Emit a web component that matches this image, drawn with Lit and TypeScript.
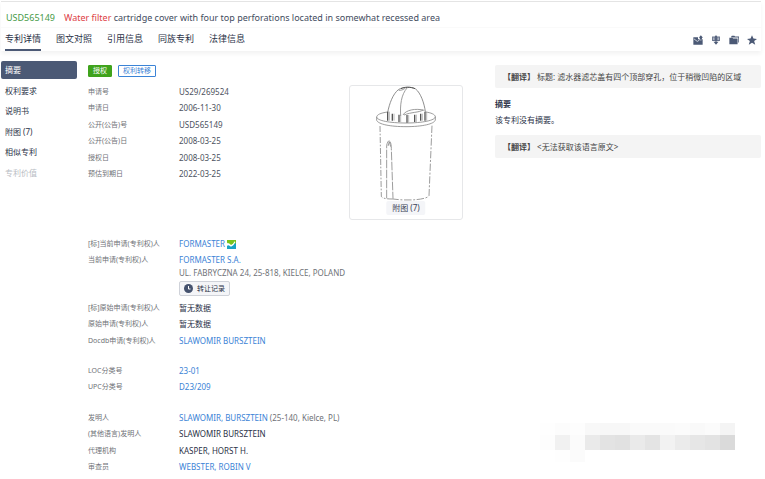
import { LitElement, html, svg, css, nothing, TemplateResult } from "lit";
import { customElement, property, state } from "lit/decorators.js";
import { classMap } from "lit/directives/class-map.js";

interface Field {
  label: string;
  value: string;
  link?: boolean;
  strong?: boolean;
  note?: string;
  brand?: boolean;
  address?: string;
}

const FILING: Field[] = [
  { label: "申请号", value: "US29/269524" },
  { label: "申请日", value: "2006-11-30" },
  { label: "公开(公告)号", value: "USD565149" },
  { label: "公开(公告)日", value: "2008-03-25" },
  { label: "授权日", value: "2008-03-25" },
  { label: "预估到期日", value: "2022-03-25" },
];

const OWNERS: Field[] = [
  { label: "[标]当前申请(专利权)人", value: "FORMASTER", link: true, brand: true },
  {
    label: "当前申请(专利权)人",
    value: "FORMASTER S.A.",
    link: true,
    address: "UL. FABRYCZNA 24, 25-818, KIELCE, POLAND",
  },
  { label: "[标]原始申请(专利权)人", value: "暂无数据", strong: true },
  { label: "原始申请(专利权)人", value: "暂无数据", strong: true },
  { label: "Docdb申请(专利权)人", value: "SLAWOMIR BURSZTEIN", link: true },
];

const CLASSES: Field[] = [
  { label: "LOC分类号", value: "23-01", link: true },
  { label: "UPC分类号", value: "D23/209", link: true },
];

const PEOPLE: Field[] = [
  { label: "发明人", value: "SLAWOMIR, BURSZTEIN", link: true, note: "(25-140, Kielce, PL)" },
  { label: "(其他语言)发明人", value: "SLAWOMIR BURSZTEIN", strong: true },
  { label: "代理机构", value: "KASPER, HORST H.", strong: true },
  { label: "审查员", value: "WEBSTER, ROBIN V", link: true },
];

const reset = css`
  * {
    box-sizing: border-box;
  }
  a {
    color: inherit;
    text-decoration: none;
  }
  button {
    font: inherit;
    color: inherit;
    margin: 0;
    padding: 0;
    border: 0;
    background: none;
    cursor: pointer;
  }
  svg {
    display: block;
  }
`;

@customElement("field-list")
export class FieldList extends LitElement {
  @property({ attribute: false }) fields: Field[] = [];

  static styles = [
    reset,
    css`
      :host {
        display: block;
      }
      .list {
        margin: 0;
      }
      .row {
        display: grid;
        grid-template-columns: 91px 1fr;
        min-height: 16px;
        line-height: 16px;
      }
      .row:nth-child(even) {
        min-height: 17px;
      }
      .label {
        font-size: 7px;
        color: #6f7277;
        white-space: nowrap;
      }
      .value {
        margin: 0;
        color: #4c5260;
        white-space: nowrap;
      }
      .line {
        display: flex;
        align-items: center;
        gap: 2px;
      }
      .strong {
        color: #2b3247;
      }
      .link {
        color: #3b83d6;
      }
      .note,
      .address {
        color: #6f7277;
      }
      .address {
        line-height: 9px;
      }
      .record {
        display: flex;
        align-items: center;
        gap: 4px;
        height: 15px;
        margin: 4px 0;
        padding: 0 4px;
        border: 1px solid #cfd2d9;
        border-radius: 2px;
        background: #f4f5f8;
        color: #2b3247;
        font-size: 7px;
      }
    `,
  ];

  private brandIcon() {
    return html`<svg width="9" height="9" viewBox="0 0 27 27" aria-hidden="true">
      <rect width="27" height="27" rx="1" fill="#18a3c4" />
      <path d="M0 0H27V9L20 13L12 16L0 9Z" fill="#7ac31c" />
      <path d="M1 8L8 11L12 15L18 11L23 4L25 7L19 16L12 20L5 16L0 17V12Z" fill="#fff" />
      <path d="M0 19L5 18L12 22L19 18L27 10V27H0Z" fill="#18a3c4" />
    </svg>`;
  }

  private row(f: Field) {
    return html`<div class="row">
      <dt class="label">${f.label}</dt>
      <dd class="value">
        <div class="line">
          ${f.link
            ? html`<a class="link" href="#">${f.value}</a>`
            : html`<span class=${classMap({ strong: !!f.strong })}>${f.value}</span>`}
          ${f.brand ? this.brandIcon() : nothing}
          ${f.note ? html`<span class="note">${f.note}</span>` : nothing}
        </div>
        ${f.address
          ? html`<div class="address">${f.address}</div>
              <button class="record" type="button">
                <svg width="9" height="9" viewBox="0 0 18 18" aria-hidden="true">
                  <circle cx="9" cy="9" r="9" fill="#45526e" />
                  <path d="M9 4V10H13" fill="none" stroke="#fff" stroke-width="2" />
                </svg>
                转让记录
              </button>`
          : nothing}
      </dd>
    </div>`;
  }

  render() {
    return html`<dl class="list">${this.fields.map((f) => this.row(f))}</dl>`;
  }
}

const SLOTS = [
  { x: 144, top: 95, bottom: 122 },
  { x: 158, top: 101, bottom: 122 },
  { x: 178, top: 104, bottom: 126 },
  { x: 202, top: 105, bottom: 128 },
  { x: 225, top: 104, bottom: 126 },
  { x: 243, top: 101, bottom: 122 },
  { x: 256, top: 95, bottom: 122 },
];

@customElement("cartridge-figure")
export class CartridgeFigure extends LitElement {
  static styles = [
    reset,
    css`
      :host {
        display: block;
      }
      .frame {
        position: relative;
        margin: 0;
        border: 1px solid #e6e7e9;
        border-radius: 3px;
      }
      .drawing {
        width: 100%;
        height: auto;
      }
      .more {
        position: absolute;
        bottom: 4px;
        left: 50%;
        transform: translateX(-50%);
        padding: 0 6px;
        border-radius: 2px;
        background: #f4f5f8;
        color: #3a4256;
        line-height: 14px;
        white-space: nowrap;
      }
    `,
  ];

  render() {
    return html`<figure class="frame">
      <svg class="drawing" viewBox="31 18 336 399" role="img" aria-label="附图">
        <g fill="none" stroke="#888" stroke-width="2.5">
          <path d="M144 98C149 70 160 42 176 29C190 20 215 19 228 27C243 39 254 70 257 95" stroke="#777" />
          <path d="M184 26C194 21 212 20 226 26" stroke="#555" stroke-width="3" />
          <path d="M183 108C181 76 184 44 203 23" />
          <path d="M177 31C190 31 194 27 199 22" />
          <path d="M190 105C198 90 228 84 254 91M193 105C214 96 238 98 250 90" />
          <path d="M144 96C122 99 112 104 111 111C112 122 150 129 199 129C249 129 287 121 287 110C286 103 274 98 257 96" />
          <path d="M111 111V121C116 133 152 140 199 140C248 140 284 132 287 120V110" />
          <path d="M121 138L125 349C127 355 139 357 160 357" stroke-dasharray="18 5 5 5" />
          <path d="M277 137L268 347C263 358 211 364 160 357" stroke-dasharray="22 5 6 5" />
          <path d="M141 355V196C143 187 146 182 149 182C153 185 155 194 155 206L160 356" stroke-dasharray="26 4" />
          <path d="M145 198L149 185L153 200" />
        </g>
        <g fill="none" stroke="#555" stroke-width="4">
          ${SLOTS.map((s) => svg`<path d=${`M${s.x} ${s.top}V${s.bottom}`} />`)}
        </g>
        <g fill="none" stroke="#999" stroke-width="2">
          ${SLOTS.map((s) => svg`<path d=${`M${s.x + 5} ${s.top}V${s.bottom}`} />`)}
        </g>
      </svg>
      <button class="more" type="button">附图 (7)</button>
    </figure>`;
  }
}

const MOSAIC: string[][] = [
  ["#fefefe", "#fcfcfc", "#fdfdfd", "#f8f8f8", "#f7f7f7", "#f7f7f7", "#fafafa", "#fafafa", "#fafafa", "#fbfbfb", "#f9f9f9", "#fbfbfb", "#f4f4f4"],
  ["#fdfdfd", "#f1f1f1", "#fbfbfb", "#eaeaea", "#e3e3e3", "#e1e1e1", "#eaeaea", "#e4e4e4", "#f2f2f2", "#ebebeb", "#e6e6e6", "#e3e3e3", "#dadada"],
  ["#fff", "#fefefe", "#fbfbfb", "#fff", "#fff", "#fff", "#fff", "#fff", "#fff", "#fff", "#fff", "#fff", "#fff"],
];

const TABS = ["专利详情", "图文对照", "引用信息", "同族专利", "法律信息"];
const SECTIONS = ["摘要", "权利要求", "说明书", "附图 (7)", "相似专利", "专利价值"];

const TOOLS: { name: string; art: TemplateResult }[] = [
  {
    name: "导出",
    art: svg`<path d="M1 6H14V12H18V15H24V12H27V27H1Z" fill="#4b5975"/><path d="M22 1L28 8H25V13H19V8H16Z" fill="#4b5975"/><path d="M3 11L12 18L17 15" fill="none" stroke="#fff" stroke-width="2"/>`,
  },
  {
    name: "下载",
    art: svg`<path d="M3 4H11V2H17V4H25V17H3Z" fill="#66728b"/><path d="M8 7V14M20 7V14" stroke="#fff" stroke-width="2" fill="none"/><path d="M14 2V22" stroke="#4b5975" stroke-width="3"/><path d="M7 19H21L14 27Z" fill="#4b5975"/>`,
  },
  {
    name: "收藏夹",
    art: svg`<path d="M6 5L8 2H15L17 4H28V21H26V7H6Z" fill="#4b5975"/><path d="M1 8H9L12 10H24V26H1Z" fill="#4b5975"/>`,
  },
  {
    name: "关注",
    art: svg`<path d="M14 1L18 10L28 11L20 17L23 27L14 22L5 27L8 17L0 11L10 10Z" fill="#4b5975"/>`,
  },
];

@customElement("app-root")
export class AppRoot extends LitElement {
  @state() private tab = 0;
  @state() private section = 0;

  static styles = [
    reset,
    css`
      :host {
        display: block;
        position: relative;
        box-sizing: border-box;
        min-height: 100vh;
        padding: 1px 4px 0 1px;
        background: #fff;
        color: #2b3247;
        font-family: "Noto Sans", "Noto Sans CJK SC", sans-serif;
        font-size: 8px;
      }
      .header {
        border-top: 1px solid #e4e4e4;
        box-shadow: 0 3px 4px #f3f3f3;
      }
      .title {
        display: flex;
        gap: 9px;
        margin: 0;
        padding: 7px 5px 0;
        border-bottom: 1px solid #fafafa;
        font-size: 9px;
        font-weight: 400;
        line-height: 18px;
        color: #3f4c5e;
        white-space: nowrap;
      }
      .number {
        color: #469a46;
      }
      .hit {
        color: #dd4046;
      }
      .bar {
        display: flex;
        justify-content: space-between;
        padding: 0 4px;
      }
      .tabs {
        display: flex;
        gap: 15px;
        font-size: 9px;
        line-height: 21px;
      }
      .tab {
        border-bottom: 2px solid transparent;
      }
      .tab.on {
        border-color: #4b5975;
      }
      .tools {
        display: flex;
        align-items: center;
        gap: 8px;
      }
      .body {
        display: grid;
        grid-template-columns: 76px 272px 114px 1fr;
        align-items: start;
        padding-top: 10px;
      }
      .nav {
        display: flex;
        flex-direction: column;
        justify-content: space-between;
        min-height: 121px;
        line-height: 18px;
      }
      .item {
        padding: 0 4px;
        border-radius: 2px;
      }
      .item.on {
        background: #4b5975;
        color: #fff;
      }
      .item.off {
        color: #b9bdc4;
      }
      .detail {
        display: flex;
        flex-direction: column;
        gap: 14px;
        padding: 4px 0 0 11px;
      }
      .filing {
        margin-bottom: 39px;
      }
      .tags {
        display: flex;
        gap: 6px;
        margin-bottom: 7px;
        line-height: 10px;
      }
      .tag {
        padding: 0 4px;
        border: 1px solid #3b83d6;
        border-radius: 1px;
        color: #3b83d6;
        font-size: 7px;
      }
      .tag.granted {
        border-color: #3fa31c;
        background: #3fa31c;
        color: #fff;
      }
      .figure {
        margin-top: 24px;
      }
      .summary {
        padding: 4px 0 0 32px;
      }
      .translation {
        margin: 0;
        padding: 0 8px;
        border-radius: 2px;
        background: #f4f4f4;
        line-height: 23px;
        color: #444;
      }
      .heading {
        margin: 8px 0 0;
        font-size: 8px;
        line-height: 16px;
      }
      .text {
        margin: 0 0 7px;
        line-height: 16px;
      }
      .mosaic {
        position: absolute;
        right: 30px;
        bottom: 17px;
        display: grid;
        grid-template-columns: repeat(13, 15px);
        grid-template-rows: 12px 15px 12px;
      }
    `,
  ];

  private select(event: Event, apply: () => void) {
    event.preventDefault();
    apply();
  }

  render() {
    return html`
      <header class="header">
        <h1 class="title">
          <span class="number">USD565149</span>
          <span><span class="hit">Water filter</span> cartridge cover with four top perforations located in somewhat recessed area</span>
        </h1>
        <div class="bar">
          <nav class="tabs">
            ${TABS.map(
              (t, i) => html`<a
                href="#"
                class=${classMap({ tab: true, on: i === this.tab })}
                @click=${(e: Event) => this.select(e, () => (this.tab = i))}
                >${t}</a
              >`,
            )}
          </nav>
          <div class="tools">
            ${TOOLS.map(
              (t) => html`<button type="button" aria-label=${t.name}>
                <svg width="10" height="10" viewBox="0 0 28 28" aria-hidden="true">${t.art}</svg>
              </button>`,
            )}
          </div>
        </div>
      </header>
      <main class="body">
        <nav class="nav">
          ${SECTIONS.map(
            (s, i) => html`<a
              href="#"
              class=${classMap({ item: true, on: i === this.section, off: i === SECTIONS.length - 1 })}
              @click=${(e: Event) => this.select(e, () => (this.section = i))}
              >${s}</a
            >`,
          )}
        </nav>
        <div class="detail">
          <section class="filing">
            <div class="tags">
              <span class="tag granted">授权</span>
              <span class="tag">权利转移</span>
            </div>
            <field-list .fields=${FILING}></field-list>
          </section>
          <field-list .fields=${OWNERS}></field-list>
          <field-list .fields=${CLASSES}></field-list>
          <field-list .fields=${PEOPLE}></field-list>
        </div>
        <cartridge-figure class="figure"></cartridge-figure>
        <section class="summary">
          <p class="translation"><b>【翻译】</b> 标题: 滤水器滤芯盖有四个顶部穿孔，位于稍微凹陷的区域</p>
          <h2 class="heading">摘要</h2>
          <p class="text">该专利没有摘要。</p>
          <p class="translation"><b>【翻译】</b> &lt;无法获取该语言原文&gt;</p>
        </section>
      </main>
      <div class="mosaic" aria-hidden="true">
        ${MOSAIC.flat().map((c) => html`<span style="background:${c}"></span>`)}
      </div>
    `;
  }
}
